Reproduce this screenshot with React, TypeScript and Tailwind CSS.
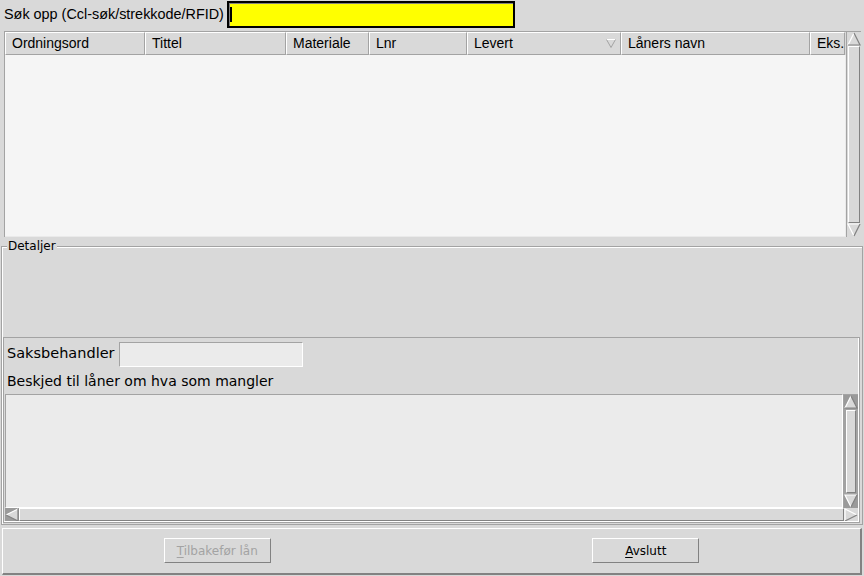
import type { ReactNode } from "react";

const sans = "font-['Liberation_Sans',Arial,sans-serif]";
const deja = "font-['DejaVu_Sans',sans-serif]";

const columns = [
  { label: "Ordningsord", width: "w-[140px]" },
  { label: "Tittel", width: "w-[141px]" },
  { label: "Materiale", width: "w-[83px]" },
  { label: "Lnr", width: "w-[98px]" },
  { label: "Levert", width: "w-[154px]", sorted: true },
  { label: "Låners navn", width: "w-[189px]" },
  { label: "Eks.", width: "w-[35px]" },
];

type Dir = "up" | "down" | "left" | "right";

function Arrow({ dir, dark }: { dir: Dir; dark?: boolean }) {
  const shapes: Record<Dir, { light: string; shade: string; fill: string }> = {
    up: { fill: "7,1 1,13 13,13", light: "M1 13 L7 1", shade: "M7 1 L13 13 L1 13" },
    down: { fill: "1,1 13,1 7,13", light: "M7 13 L1 1 L13 1", shade: "M13 1 L7 13" },
    left: { fill: "1,7 13,1 13,13", light: "M13 1 L1 7", shade: "M1 7 L13 13 L13 1" },
    right: { fill: "1,1 13,7 1,13", light: "M1 13 L1 1 L13 7", shade: "M13 7 L1 13" },
  };
  const s = shapes[dir];
  return (
    <div className={`flex h-[14px] w-[14px] shrink-0 items-center justify-center ${dark ? "bg-[#9a9a9a]" : "bg-[#d9d9d9]"}`}>
      <svg width="14" height="14" viewBox="0 0 14 14">
        <polygon points={s.fill} fill="#d9d9d9" />
        <path d={s.light} stroke="#ffffff" strokeWidth="1.2" fill="none" />
        <path d={s.shade} stroke="#828282" strokeWidth="1.2" fill="none" />
      </svg>
    </div>
  );
}

function HeaderCell({ label, width, sorted }: { label: string; width: string; sorted?: boolean }) {
  return (
    <div
      className={`${width} flex h-full shrink-0 items-center justify-between border-t border-l border-b border-r border-t-white border-l-white border-b-[#a3a3a3] border-r-[#a3a3a3] pl-[6px] pr-[3px] text-[14px] text-black`}
    >
      <span className="whitespace-nowrap">{label}</span>
      {sorted && (
        <svg width="10" height="9" viewBox="0 0 10 9" className="mr-[1px]">
          <path d="M0.5 0.5 L9.5 0.5" stroke="#ffffff" fill="none" />
          <path d="M0.5 0.5 L5 8.5 L9.5 0.5" stroke="#a3a3a3" fill="none" />
        </svg>
      )}
    </div>
  );
}

function Button({ children, disabled }: { children: ReactNode; disabled?: boolean }) {
  return (
    <button
      className={`${deja} h-[25px] w-[107px] border border-t-white border-l-white border-b-[#828282] border-r-[#828282] bg-[#d9d9d9] text-[12px] ${disabled ? "text-[#a3a3a3]" : "text-black"}`}
    >
      {children}
    </button>
  );
}

export default function App() {
  return (
    <div className={`${sans} flex h-[576px] w-[864px] flex-col overflow-hidden bg-[#d9d9d9] text-black`}>
      {/* search row */}
      <div className="flex h-[29px] items-center pl-[4px]">
        <span className="text-[14.4px] whitespace-nowrap">Søk opp (Ccl-søk/strekkode/RFID)</span>
        <div className="ml-[3px] flex h-[27px] w-[288px] items-center border-2 border-black bg-[#ffff00] shadow-[inset_1px_1px_0_#828282]">
          <div className="ml-[1px] h-[15px] w-[2px] bg-black" />
        </div>
      </div>

      {/* result list */}
      <div className="mt-[2px] ml-[4px] flex h-[206px] w-[857px] border-t border-l border-[#a3a3a3]">
        <div className="flex w-[841px] flex-col">
          <div className="flex h-[23px] shrink-0">
            {columns.map((c) => (
              <HeaderCell key={c.label} {...c} />
            ))}
          </div>
          <div className="flex-1 border-r border-b border-[#eaeaea] bg-[#f5f5f5]" />
        </div>
        <div className="flex w-[15px] flex-col border-l border-[#a3a3a3] bg-[#d9d9d9]">
          <Arrow dir="up" />
          <div className="mx-[1px] flex-1 border border-t-white border-l-white border-b-[#828282] border-r-[#828282]" />
          <Arrow dir="down" />
        </div>
      </div>

      {/* details */}
      <fieldset className="mt-[3px] ml-[1px] w-[862px] border border-[#a3a3a3] pb-[1px] shadow-[inset_1px_1px_0_#ffffff]">
        <legend className={`${deja} ml-[5px] bg-[#d9d9d9] px-[1px] text-[12px] leading-[12px]`}>Detaljer</legend>
        <div className="h-[85px]" />
        <div className="ml-[1px] w-[857px] border border-[#a3a3a3] pb-[1px] shadow-[inset_-1px_-1px_0_#ffffff]">
          <div className={`${deja} flex h-[29px] items-end pl-[3px] text-[14px]`}>
            <span className="self-center pt-[3px] text-[14.5px]">Saksbehandler</span>
            <div className="ml-[4px] h-[25px] w-[184px] border border-t-[#a3a3a3] border-l-[#a3a3a3] border-b-white border-r-white bg-[#ebebeb]" />
          </div>
          <div className={`${deja} flex h-[27px] items-center pt-[1px] pl-[3px] text-[14px]`}>
            Beskjed til låner om hva som mangler
          </div>
          <div className="ml-[1px] flex h-[114px] w-[853px]">
            <div className="w-[838px] border border-t-[#a3a3a3] border-l-[#a3a3a3] border-b-white border-r-white bg-[#ebebeb]" />
            <div className="flex w-[15px] flex-col bg-[#a3a3a3] p-[0.5px]">
              <Arrow dir="up" dark />
              <div className="mx-[2px] my-[1px] flex-1 border border-t-white border-l-white border-b-[#828282] border-r-[#828282] bg-[#d9d9d9]" />
              <Arrow dir="down" dark />
            </div>
          </div>
          <div className="ml-[1px] flex h-[13px] w-[853px] items-center bg-[#d9d9d9]">
            <div className="h-[13px] overflow-hidden">
              <Arrow dir="left" dark />
            </div>
            <div className="h-[13px] flex-1 border border-t-white border-l-white border-b-[#828282] border-r-[#828282]" />
            <div className="h-[13px] overflow-hidden">
              <Arrow dir="right" />
            </div>
          </div>
        </div>
      </fieldset>

      {/* buttons */}
      <div className="mt-[3px] ml-[2px] grid h-[47px] w-[860px] grid-cols-2 items-start border-t border-l border-r-2 border-b-2 border-t-white border-l-white border-r-[#828282] border-b-[#828282] pt-[9px]">
        <div className="flex justify-center">
          <Button disabled>
            <span className="underline underline-offset-2">T</span>ilbakefør lån
          </Button>
        </div>
        <div className="flex justify-center">
          <Button>
            <span className="underline underline-offset-2">A</span>vslutt
          </Button>
        </div>
      </div>
    </div>
  );
}
